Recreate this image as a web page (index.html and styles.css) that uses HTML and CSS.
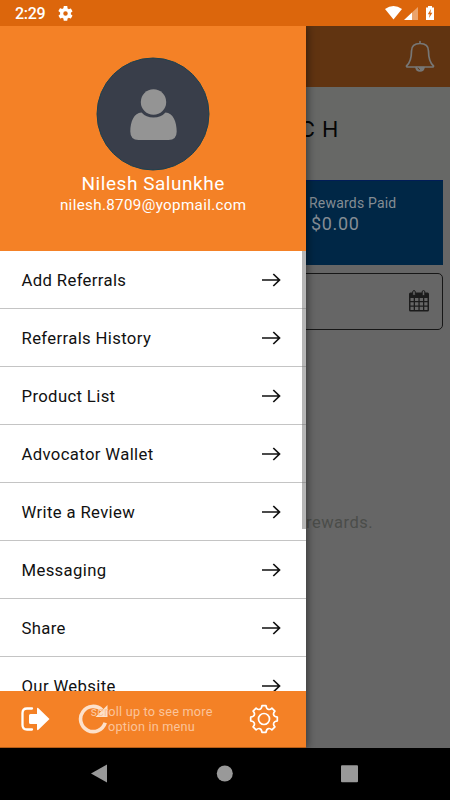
FILE: index.html
```html
<!DOCTYPE html>
<html lang="en">
<head>
<meta charset="utf-8">
<title>Menu</title>
<link rel="stylesheet" href="styles.css">
</head>
<body>
<div class="phone">
  <header class="status">
    <span class="time">2:29</span>
    <svg class="cog" width="15" height="15" viewBox="2 2 20 20"><path fill="#fff" d="M19.14 12.94c.04-.3.06-.61.06-.94s-.02-.64-.07-.94l2.03-1.58a.49.49 0 0 0 .12-.61l-1.92-3.32a.49.49 0 0 0-.59-.22l-2.39.96a7 7 0 0 0-1.62-.94l-.36-2.54A.48.48 0 0 0 13.920 2h-3.840a.48.48 0 0 0-.48.41l-.36 2.540a7.400 7.400 0 0 0-1.620.94l-2.390-.96a.48.48 0 0 0-.59.22L2.720 8.470a.48.48 0 0 0 .12.61l2.030 1.580a6 6 0 0 0 0 2.280l-2.030 1.580a.49.49 0 0 0-.12.61l1.920 3.320c.12.22.37.29.59.22l2.390-.96c.5.38 1.030.7 1.620.94l.36 2.540c.05.24.24.41.48.41h3.840c.24 0 .44-.17.47-.41l.36-2.540a7 7 0 0 0 1.620-.94l2.390.96c.22.08.47 0 .59-.22l1.920-3.320a.48.48 0 0 0-.12-.61zM12 15a3 3 0 1 1 0-6 3 3 0 0 1 0 6z"/></svg>
    <svg class="signals" width="50" height="16" viewBox="0 0 50 16"><path fill="#fff" d="M0 4.100Q8.500-2.100 17 4.100L8.500 14.500z"/><path fill="#fff" d="M19 15L27 7.500V15z"/><path fill="#eba36b" d="M27 7.500L33 2V15H27z"/><path fill="#fff" d="M41 2.500h2V1h4v1.500h2V15h-8z"/><path fill="#dc660c" d="M46 4L42.800 9.200h1.900L44 13l3.400-5.200h-2z"/></svg>
  </header>

  <main class="screen">
    <section class="page">
      <div class="appbar">
        <svg width="30" height="33" viewBox="0 0 30 33" fill="none" stroke="#777776" stroke-width="1.700" stroke-linejoin="round" stroke-linecap="round"><path d="M15 1.500V3.500M1.500 26Q6.500 21.500 6.500 11Q6.500 3.500 15 3.500T23.500 11Q23.500 21.500 28.500 26Q28.700 27 27.500 27H2.500Q1.300 27 1.500 26z"/><path d="M11 27.500Q11.500 31 15 31T19 27.500z" fill="#777776"/><path d="M13 28q.3 1.300 1.500 1.500" stroke="#613411" stroke-width="1"/></svg>
      </div>
      <div class="brand">CH</div>
      <div class="rewards"><div class="paid">Rewards Paid</div><div class="amount">$0.00</div></div>
      <div class="datebox">
        <svg width="20" height="22" viewBox="0 0 20 22"><path fill="#1c1c1c" d="M0 4q0-1.500 1.500-1.500h17Q20 2.500 20 4v16q0 1.500-1.500 1.500h-17Q0 21.500 0 20z"/><g fill="#666"><path d="M1.500 8h3.200v3H1.500zM6 8h3.400v3H6zM10.700 8h3.300v3h-3.300zM15.300 8h3.200v3h-3.200zM1.500 12.200h3.200v3.400H1.500zM6 12.200h3.400v3.400H6zM10.700 12.200h3.300v3.400h-3.300zM15.300 12.200h3.200v3.400h-3.200zM1.500 16.800h3.200V20H1.500zM6 16.800h3.400V20H6zM10.700 16.800h3.300V20h-3.300zM15.300 16.800h3.200V20h-3.200z"/></g><g fill="#666" stroke="#1c1c1c"><rect x="3.700" y=".6" width="2.600" height="5" rx="1.300"/><rect x="13.200" y=".6" width="2.600" height="5" rx="1.300"/></g></svg>
      </div>
      <p class="empty">rewards.</p>
    </section>

    <aside class="drawer">
      <div class="profile">
        <svg class="avatar" width="114" height="114" viewBox="0 0 114 114"><circle cx="57" cy="57" r="56" fill="#393e4a" stroke="#1d414f"/><circle cx="57.500" cy="45" r="12.700" fill="#949494"/><path fill="#949494" d="M45.500 55.500Q50 60.500 57.500 60.500T69.500 55.500C77 55.500 80.700 65 80.700 74.500Q80.700 83 72.500 83H42.500Q34.300 83 34.300 74.500C34.300 65 38 55.500 45.500 55.500z"/></svg>
        <div class="name">Nilesh Salunkhe</div>
        <div class="mail">nilesh.8709@yopmail.com</div>
      </div>
      <nav class="menu">
        <a><span>Add Referrals</span><svg class="arrow" viewBox="0 0 19 14"><path d="M0 7H17.500M11.300 1L17.500 7L11.300 13"/></svg></a>
        <a><span>Referrals History</span><svg class="arrow" viewBox="0 0 19 14"><path d="M0 7H17.500M11.300 1L17.500 7L11.300 13"/></svg></a>
        <a><span>Product List</span><svg class="arrow" viewBox="0 0 19 14"><path d="M0 7H17.500M11.300 1L17.500 7L11.300 13"/></svg></a>
        <a><span>Advocator Wallet</span><svg class="arrow" viewBox="0 0 19 14"><path d="M0 7H17.500M11.300 1L17.500 7L11.300 13"/></svg></a>
        <a><span>Write a Review</span><svg class="arrow" viewBox="0 0 19 14"><path d="M0 7H17.500M11.300 1L17.500 7L11.300 13"/></svg></a>
        <a><span>Messaging</span><svg class="arrow" viewBox="0 0 19 14"><path d="M0 7H17.500M11.300 1L17.500 7L11.300 13"/></svg></a>
        <a><span>Share</span><svg class="arrow" viewBox="0 0 19 14"><path d="M0 7H17.500M11.300 1L17.500 7L11.300 13"/></svg></a>
        <a><span>Our Website</span><svg class="arrow" viewBox="0 0 19 14"><path d="M0 7H17.500M11.300 1L17.500 7L11.300 13"/></svg></a>
        <i class="scrollbar"></i>
      </nav>
      <footer class="tools">
        <svg class="logout" width="30" height="24" viewBox="0 0 30 24"><path d="M11 1.500H6Q1.500 1.500 1.500 6V18Q1.500 22.500 6 22.500H11" fill="none" stroke="#fff" stroke-width="2.300" stroke-linecap="round"/><path fill="#fff" d="M9.500 7H16V2Q16 0 17.700 1.500L28.500 12L17.700 22.500Q16 24 16 22V17H9.500Q8 17 8 15.500v-7Q8 7 9.500 7z"/></svg>
        <svg class="reload" width="30" height="30" viewBox="0 0 30 30"><path d="M27.200 18.800A12.600 12.600 0 1 1 24 6" fill="none" stroke="#fde1cb" stroke-width="3.600"/><path fill="#fde1cb" d="M29.500 1V13H17.500z"/></svg>
        <div class="hint">scroll up to see more<br>option in menu</div>
        <svg class="gear" width="30" height="30" viewBox="-15 -15 30 30" fill="none" stroke="#fff" stroke-width="1.700" stroke-linejoin="round"><path d="M-2-13.300H2Q2.400-10 4.400-9.600Q6-9.100 7.900-10.900L10.900-7.900Q9.100-6 9.600-4.400Q10-2.400 13.300-2V2Q10 2.400 9.600 4.400Q9.100 6 10.900 7.900L7.900 10.900Q6 9.100 4.400 9.600Q2.400 10 2 13.300H-2Q-2.400 10-4.400 9.600Q-6 9.100-7.900 10.900L-10.900 7.900Q-9.100 6-9.600 4.400Q-10 2.400-13.300 2V-2Q-10-2.400-9.600-4.400Q-9.100-6-10.900-7.900L-7.900-10.900Q-6-9.100-4.400-9.600Q-2.400-10-2-13.300z"/><circle r="5.500"/></svg>
      </footer>
    </aside>
  </main>

  <footer class="navbar">
    <svg width="450" height="52" viewBox="0 0 450 52" fill="#999"><path d="M91 25.500L107 16.500V34.500z"/><circle cx="224.800" cy="25.500" r="8"/><rect x="341" y="17.200" width="17" height="17" rx="1"/></svg>
  </footer>
</div>
</body>
</html>
```
FILE: styles.css
```css
* { box-sizing: border-box; }
body { margin: 0; font-family: Roboto, "Liberation Sans", sans-serif; }
svg { display: block; flex: none; }
.phone { width: 450px; height: 800px; display: flex; flex-direction: column; overflow: hidden; }
.status { height: 26px; flex: none; background: #dc660c; display: flex; align-items: center; padding: 0 15px; color: #fff; }
.time { font-size: 16px; font-weight: 500; line-height: 26px; width: 43px; padding-top: 2px; letter-spacing: -.3px; }
.signals { margin-left: auto; }
.screen { flex: 1; position: relative; background: #666; overflow: hidden; }
.appbar { height: 61px; background: #613411; display: flex; justify-content: flex-end; padding: 14px 15px 0 0; }
.brand { height: 93px; padding: 28px 0 0 299px; font-size: 22px; line-height: 28px; letter-spacing: 7px; color: #050505; font-family: Inter, sans-serif; background: #676866; }
.rewards { height: 85px; margin-right: 7px; padding: 13px 0 0 309px; background: #002746; border-top: 1px solid #001d57; color: #858d94; }
.paid { font-size: 14px; line-height: 18px; letter-spacing: .2px; }
.amount { font-size: 18px; line-height: 23px; letter-spacing: .65px; padding-left: 2px; }
.datebox { height: 57px; margin: 8px 7px 0 0; border: 1px solid #171717; border-radius: 5px; display: flex; justify-content: flex-end; padding: 16px 13px 0 0; }
.empty { margin: 183px 0 0 306px; font-size: 16.500px; line-height: 20px; letter-spacing: .5px; color: #4b4d4a; }
.drawer { position: absolute; left: 0; top: 0; width: 306.400px; height: 722px; background: #fff; display: flex; flex-direction: column; box-shadow: 0 0 9px 1px rgba(0,0,0,.5); }
.profile { height: 225.400px; flex: none; background: #f48126; padding-top: 31px; color: #fff; display: flex; flex-direction: column; align-items: center; }
.name { font-size: 19px; line-height: 22px; letter-spacing: .55px; margin-top: 2px; }
.mail { font-size: 15.200px; line-height: 20px; letter-spacing: .33px; }
.menu { flex: 1; min-height: 0; overflow: hidden; position: relative; }
.menu a { display: flex; height: 58px; padding: 2px 25px 0 21.500px; justify-content: space-between; align-items: center; border-bottom: 1px solid #c4c4c4; font-size: 16.700px; letter-spacing: .36px; color: #111; }
.arrow { width: 19px; height: 14px; fill: none; stroke: #111; stroke-width: 1.700; margin-top: -1px; }
.scrollbar { position: absolute; right: 0; top: 0; width: 4.500px; height: 278px; background: rgba(110,110,110,.5); }
.tools { height: 57.500px; flex: none; background: #f48126; border-bottom: 1px solid #b45d18; display: flex; padding: 13.500px 27px 0 21px; }
.logout { margin-top: 2.500px; }
.reload { margin-left: 26.500px; }
.hint { margin-left: -21px; width: 130px; text-align: center; font-size: 12.700px; line-height: 15px; letter-spacing: .2px; color: #fbc49b; white-space: nowrap; }
.gear { margin-left: auto; }
.navbar { height: 52px; flex: none; background: #000; }
```
